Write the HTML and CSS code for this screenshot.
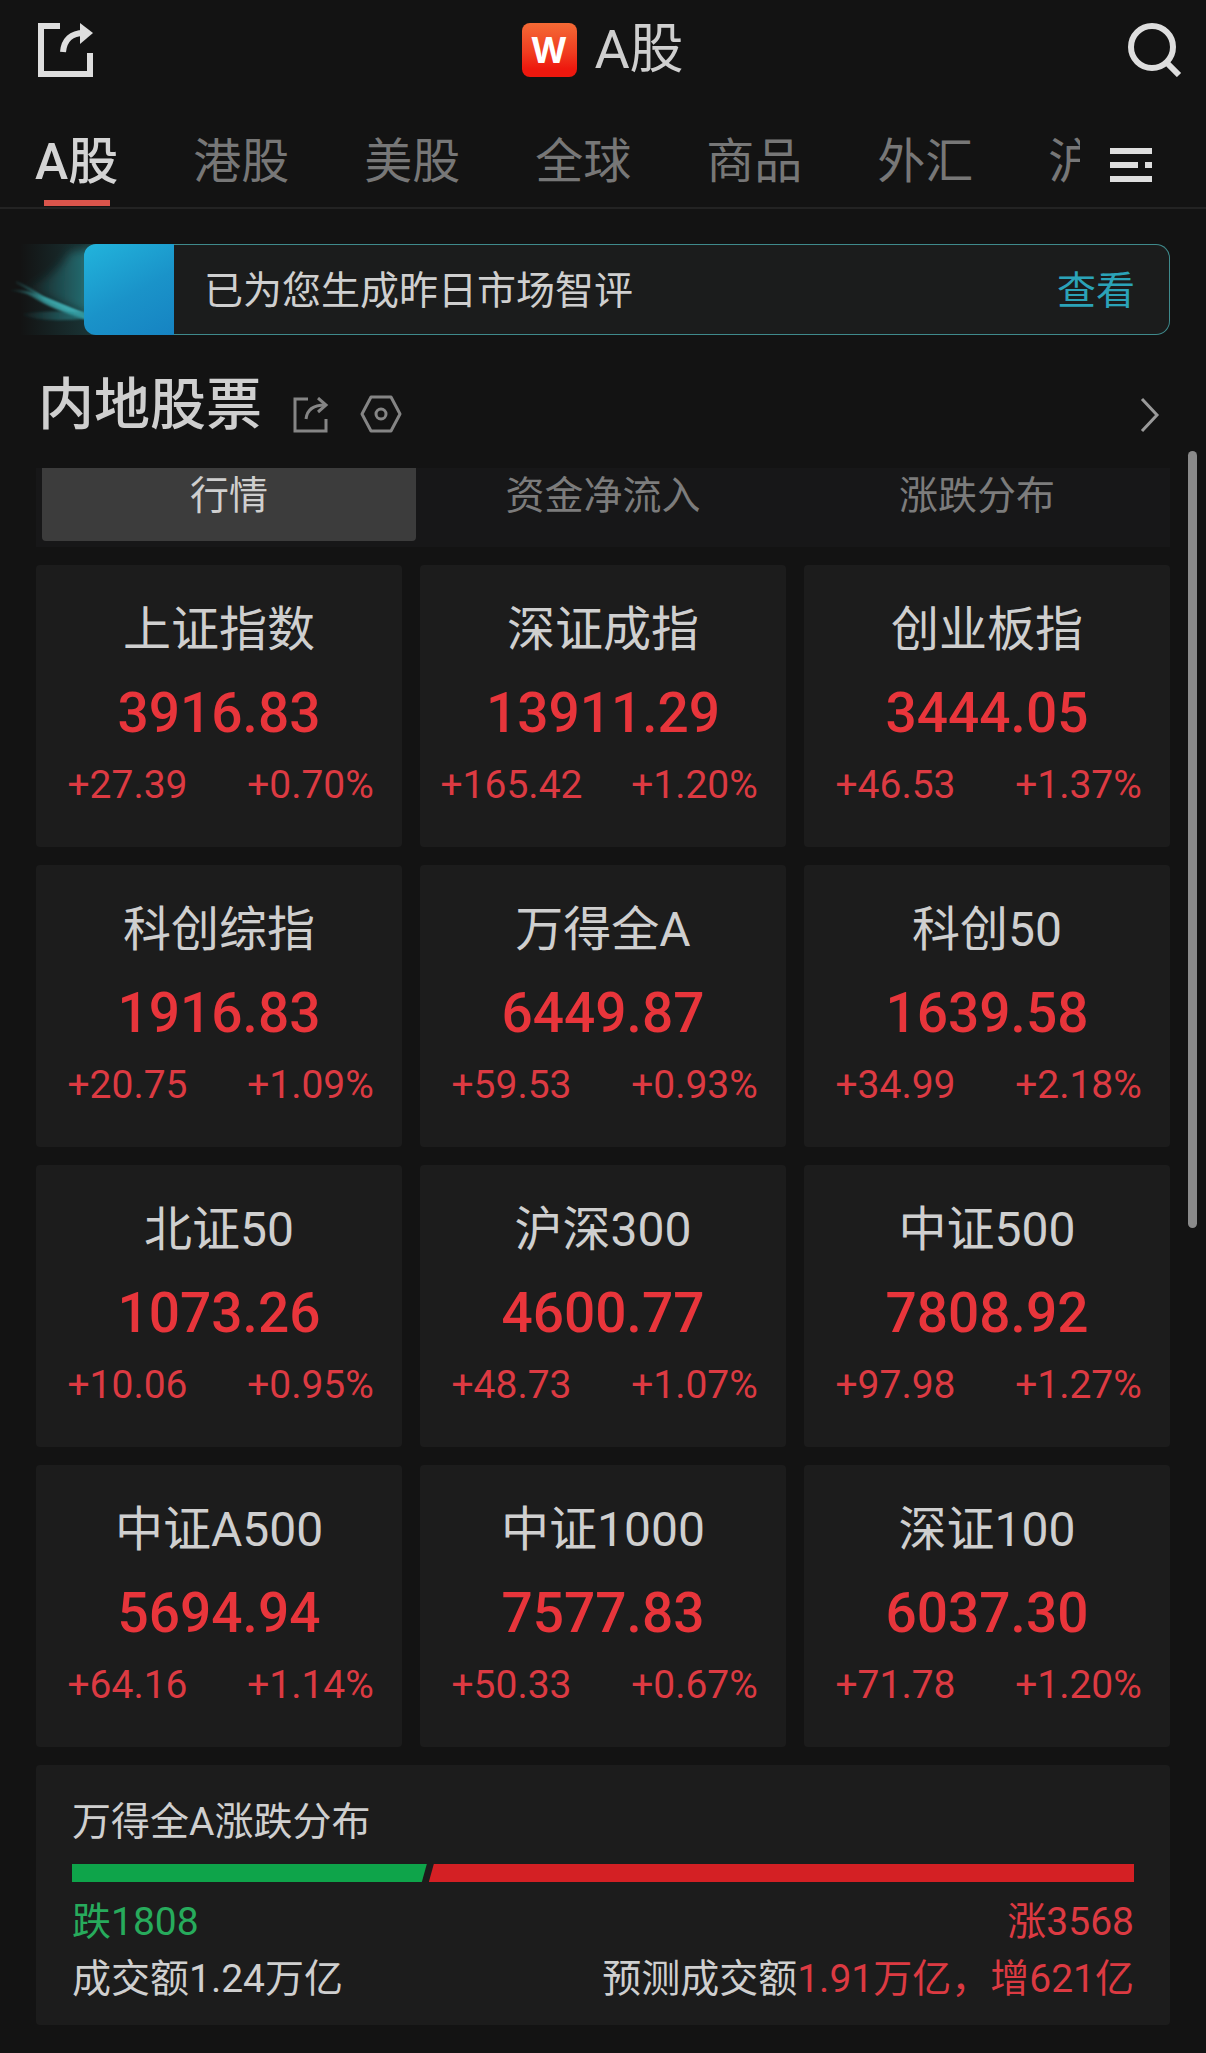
FILE: index.html
```html
<!DOCTYPE html>
<html lang="zh-CN">

<head>
    <meta charset="UTF-8">
    <meta name="viewport" content="width=device-width, initial-scale=1.0">
    <title>A股</title>
    <link rel="stylesheet" href="styles.css">
</head>

<body>
    <header class="topbar">
        <button class="icon-btn" type="button" aria-label="分享">
            <svg width="56" height="54" viewBox="0 0 56 54" fill="none" stroke="#dedede" stroke-width="6">
                <path d="M22 3H3v48h49V30" />
                <path d="M25 29C26 17 33 10 46 10" />
                <path d="M42 0L55 10L42 21Z" fill="#dedede" stroke="none" />
            </svg>
        </button>
        <h1 class="topbar-title">
            <svg width="56" height="54" viewBox="0 0 56 54" aria-hidden="true">
                <defs>
                    <linearGradient id="logoBg" x1="0" y1="0" x2="0" y2="1">
                        <stop offset="0" stop-color="#f56a35" />
                        <stop offset="0.55" stop-color="#f03c20" />
                        <stop offset="0.85" stop-color="#ee180e" />
                    </linearGradient>
                </defs>
                <rect width="55" height="54" rx="8" fill="url(#logoBg)" />
                <text class="logo-text" x="27" y="40" text-anchor="middle">W</text>
            </svg>
            <span>A股</span>
        </h1>
        <button class="icon-btn icon-btn-right" type="button" aria-label="搜索">
            <svg width="54" height="54" viewBox="0 0 54 54" fill="none" stroke="#dedede" stroke-width="6">
                <circle cx="24" cy="24" r="21" />
                <path d="M39 40L51 52" />
            </svg>
        </button>
    </header>

    <nav class="tabs">
        <div class="tabs-scroll">
            <a class="tab active" href="#a">A股</a>
            <a class="tab" href="#hk">港股</a>
            <a class="tab" href="#us">美股</a>
            <a class="tab" href="#global">全球</a>
            <a class="tab" href="#goods">商品</a>
            <a class="tab" href="#fx">外汇</a>
            <a class="tab" href="#sh">沪</a>
        </div>
        <button class="icon-btn" type="button" aria-label="菜单">
            <svg width="42" height="36" viewBox="0 0 42 36" fill="#dedede">
                <path d="M0 0h42v6H0zM0 14h28v6H0zM35 14h7v6h-7zM0 28h42v6H0z" />
            </svg>
        </button>
    </nav>

    <main>
        <div class="banner">
            <svg class="banner-glow" viewBox="0 0 96 91" aria-hidden="true">
                <defs>
                    <linearGradient id="glowFill" x1="0" y1="0" x2="1" y2="0">
                        <stop offset="0" stop-color="#2a8a90" stop-opacity="0" />
                        <stop offset="1" stop-color="#2a8a90" stop-opacity="0.75" />
                    </linearGradient>
                    <linearGradient id="glowLine" x1="0" y1="0" x2="1" y2="0">
                        <stop offset="0" stop-color="#3fb5b8" stop-opacity="0.1" />
                        <stop offset="0.4" stop-color="#3fb5b8" stop-opacity="0.7" />
                        <stop offset="1" stop-color="#46bcc4" />
                    </linearGradient>
                    <filter id="soft" x="-20%" y="-20%" width="140%" height="140%">
                        <feGaussianBlur stdDeviation="5" />
                    </filter>
                    <filter id="softLine" x="-10%" y="-20%" width="120%" height="140%">
                        <feGaussianBlur stdDeviation="1" />
                    </filter>
                </defs>
                <rect x="20" width="76" height="91" fill="url(#glowFill)" opacity="0.4" />
                <path d="M24 44Q56 34 70 8L96 4V74Q56 56 24 44Z" fill="url(#glowFill)" filter="url(#soft)" />
                <path d="M10 46Q28 45 42 52L96 75V78Q58 68 38 56Q26 48 10 46Z" fill="url(#glowLine)" filter="url(#softLine)" />
                <path d="M16 38Q32 46 44 54L88 72" fill="none" stroke="url(#glowLine)" stroke-width="2" filter="url(#softLine)" />
                <path d="M20 70Q44 80 88 74V68Q50 66 20 70Z" fill="url(#glowFill)" filter="url(#softLine)" />
            </svg>
            <div class="banner-thumb"></div>
            <div class="banner-body">
                <span>已为您生成昨日市场智评</span>
                <a href="#review">查看</a>
            </div>
        </div>

        <div class="section-head">
            <h2>内地股票</h2>
            <button class="icon-btn" type="button" aria-label="分享板块">
                <svg width="36" height="36" viewBox="0 0 36 36" fill="none" stroke="#858585" stroke-width="3">
                    <path d="M15 2H2v32h31V22" />
                    <path d="M13 22C14 13 20 8 32 8" />
                    <path d="M25 1L33 8L25 15" />
                </svg>
            </button>
            <button class="icon-btn" type="button" aria-label="设置">
                <svg width="42" height="38" viewBox="0 0 42 38" fill="none" stroke="#858585" stroke-width="3">
                    <path d="M11 2H31L40 19L31 36H11L2 19Z" stroke-linejoin="round" />
                    <circle cx="21" cy="19" r="5" />
                </svg>
            </button>
            <a class="more" href="#more" aria-label="更多">
                <svg width="20" height="36" viewBox="0 0 20 36" fill="none" stroke="#9a9a9a" stroke-width="3">
                    <path d="M2 2L17 18L2 34" />
                </svg>
            </a>
        </div>

        <div class="segments">
            <button class="segment active" type="button">行情</button>
            <button class="segment" type="button">资金净流入</button>
            <button class="segment" type="button">涨跌分布</button>
        </div>

        <div class="cards">
            <div class="card">
                <h3>上证指数</h3>
                <div class="price">3916.83</div>
                <div class="change"><span>+27.39</span><span>+0.70%</span></div>
            </div>
            <div class="card">
                <h3>深证成指</h3>
                <div class="price">13911.29</div>
                <div class="change"><span>+165.42</span><span>+1.20%</span></div>
            </div>
            <div class="card">
                <h3>创业板指</h3>
                <div class="price">3444.05</div>
                <div class="change"><span>+46.53</span><span>+1.37%</span></div>
            </div>
            <div class="card">
                <h3>科创综指</h3>
                <div class="price">1916.83</div>
                <div class="change"><span>+20.75</span><span>+1.09%</span></div>
            </div>
            <div class="card">
                <h3>万得全A</h3>
                <div class="price">6449.87</div>
                <div class="change"><span>+59.53</span><span>+0.93%</span></div>
            </div>
            <div class="card">
                <h3>科创50</h3>
                <div class="price">1639.58</div>
                <div class="change"><span>+34.99</span><span>+2.18%</span></div>
            </div>
            <div class="card">
                <h3>北证50</h3>
                <div class="price">1073.26</div>
                <div class="change"><span>+10.06</span><span>+0.95%</span></div>
            </div>
            <div class="card">
                <h3>沪深300</h3>
                <div class="price">4600.77</div>
                <div class="change"><span>+48.73</span><span>+1.07%</span></div>
            </div>
            <div class="card">
                <h3>中证500</h3>
                <div class="price">7808.92</div>
                <div class="change"><span>+97.98</span><span>+1.27%</span></div>
            </div>
            <div class="card">
                <h3>中证A500</h3>
                <div class="price">5694.94</div>
                <div class="change"><span>+64.16</span><span>+1.14%</span></div>
            </div>
            <div class="card">
                <h3>中证1000</h3>
                <div class="price">7577.83</div>
                <div class="change"><span>+50.33</span><span>+0.67%</span></div>
            </div>
            <div class="card">
                <h3>深证100</h3>
                <div class="price">6037.30</div>
                <div class="change"><span>+71.78</span><span>+1.20%</span></div>
            </div>
        </div>

        <section class="spread">
            <h3>万得全A涨跌分布</h3>
            <div class="spread-bar">
                <div class="bar-down" style="width: 33.6%"></div>
                <div class="bar-up"></div>
            </div>
            <div class="spread-row">
                <span class="down">跌1808</span>
                <span class="up">涨3568</span>
            </div>
            <div class="spread-row">
                <span>成交额1.24万亿</span>
                <span>预测成交额<span class="up">1.91万亿，增621亿</span></span>
            </div>
        </section>
    </main>

    <div class="scroll-thumb"></div>
</body>

</html>
```

FILE: styles.css
```css
* {
    box-sizing: border-box;
}

body {
    position: relative;
    margin: 0;
    background-color: #131313;
    color: #cfcfcf;
    font-family: Roboto, 'Noto Sans CJK SC', sans-serif;
    font-size: 39px;
}

h1, h2, h3 {
    margin: 0;
    font-weight: 400;
}

a {
    color: inherit;
    text-decoration: none;
}

button {
    padding: 0;
    border: none;
    background: none;
    color: inherit;
    font: inherit;
    cursor: pointer;
}

svg {
    display: block;
}

/* top bar */
.topbar {
    display: grid;
    grid-template-columns: 1fr auto 1fr;
    align-items: center;
    height: 100px;
    padding: 0 24px;
}

.icon-btn {
    justify-self: start;
}

.topbar .icon-btn {
    margin-left: 14px;
}

.icon-btn-right {
    justify-self: end;
}

.topbar-title {
    display: flex;
    align-items: center;
    gap: 16px;
    font-size: 54px;
    line-height: 54px;
}

.logo-text {
    font-family: Inter, sans-serif;
    font-size: 35px;
    font-weight: 700;
    fill: #fff;
}

/* market tabs */
.tabs {
    display: flex;
    align-items: center;
    gap: 30px;
    padding: 24px 54px 0 35px;
    border-bottom: 2px solid #232323;
}

.tabs-scroll {
    display: flex;
    flex: 1;
    gap: 75px;
    min-width: 0;
    overflow: hidden;
}

.tab {
    flex: none;
    padding-bottom: 7px;
    color: #777;
    font-size: 48px;
    line-height: 76px;
}

.tab.active {
    padding-bottom: 0;
    color: #d4d4d4;
    font-size: 50px;
    font-weight: 500;
}

.tab.active::after {
    content: "";
    display: block;
    width: 66px;
    height: 6px;
    margin: 0 auto;
    background-color: #d9544b;
}

/* banner */
.banner {
    display: flex;
    height: 91px;
    margin: 35px 36px 0 0;
}

.banner-glow {
    width: 96px;
    height: 91px;
    margin-right: -12px;
}

.banner-thumb {
    position: relative;
    width: 90px;
    border-radius: 12px 0 0 12px;
    background: linear-gradient(150deg, #22b4dc, #1a93c9 55%, #1683c2);
}

.banner-body {
    display: flex;
    flex: 1;
    align-items: center;
    justify-content: space-between;
    padding: 0 34px 6px 30px;
    border: 1px solid #3f8a8c;
    border-left: none;
    border-radius: 0 14px 14px 0;
    background-color: #1b1c1c;
}

.banner-body a {
    color: #2ba3b8;
}

/* section title */
.section-head {
    display: flex;
    align-items: flex-end;
    gap: 31px;
    padding: 42px 46px 35px 38px;
}

.section-head h2 {
    font-size: 56px;
    font-weight: 500;
    line-height: 56px;
}

.more {
    margin-left: auto;
}

.segments {
    display: grid;
    grid-template-columns: repeat(3, 1fr);
    margin: 0 36px 18px;
    padding: 0 6px 6px;
    background-color: #171718;
}

.segment {
    padding-bottom: 17px;
    border-radius: 0 0 4px 4px;
    color: #7c7c7c;
    line-height: 56px;
}

.segment.active {
    background-color: #3c3c3c;
    color: #cfcfcf;
}

/* index cards */
.cards {
    display: grid;
    grid-template-columns: repeat(3, 1fr);
    gap: 18px;
    margin: 0 36px 18px;
}

.card {
    padding: 30px 0 38px;
    border-radius: 4px;
    background-color: #1c1c1c;
    text-align: center;
}

.card h3 {
    font-size: 48px;
    line-height: 70px;
}

.price {
    color: #e8353b;
    font-size: 55px;
    font-weight: 500;
    line-height: 96px;
}

.change {
    display: grid;
    grid-template-columns: 1fr 1fr;
    color: #dc3a42;
    line-height: 48px;
}

/* up / down distribution */
.spread {
    margin: 0 36px 29px;
    padding: 36px 36px 17px;
    border-radius: 4px;
    background-color: #1c1c1c;
}

.spread h3 {
    font-size: 39px;
    line-height: 42px;
}

.spread-bar {
    display: flex;
    height: 18px;
    margin: 21px 0 12px;
}

.bar-down {
    background-color: #0ea44a;
    clip-path: polygon(0 0, calc(100% - 2px) 0, calc(100% - 7px) 100%, 0 100%);
}

.bar-up {
    flex: 1;
    background-color: #d42024;
    clip-path: polygon(5px 0, 100% 0, 100% 100%, 0 100%);
}

.spread-row {
    display: flex;
    justify-content: space-between;
    line-height: 57px;
}

.down {
    color: #27ab5c;
}

.up {
    color: #dc3a42;
}

.scroll-thumb {
    position: absolute;
    top: 451px;
    right: 9px;
    width: 9px;
    height: 777px;
    border-radius: 5px;
    background-color: #8a8a8a;
}
```
